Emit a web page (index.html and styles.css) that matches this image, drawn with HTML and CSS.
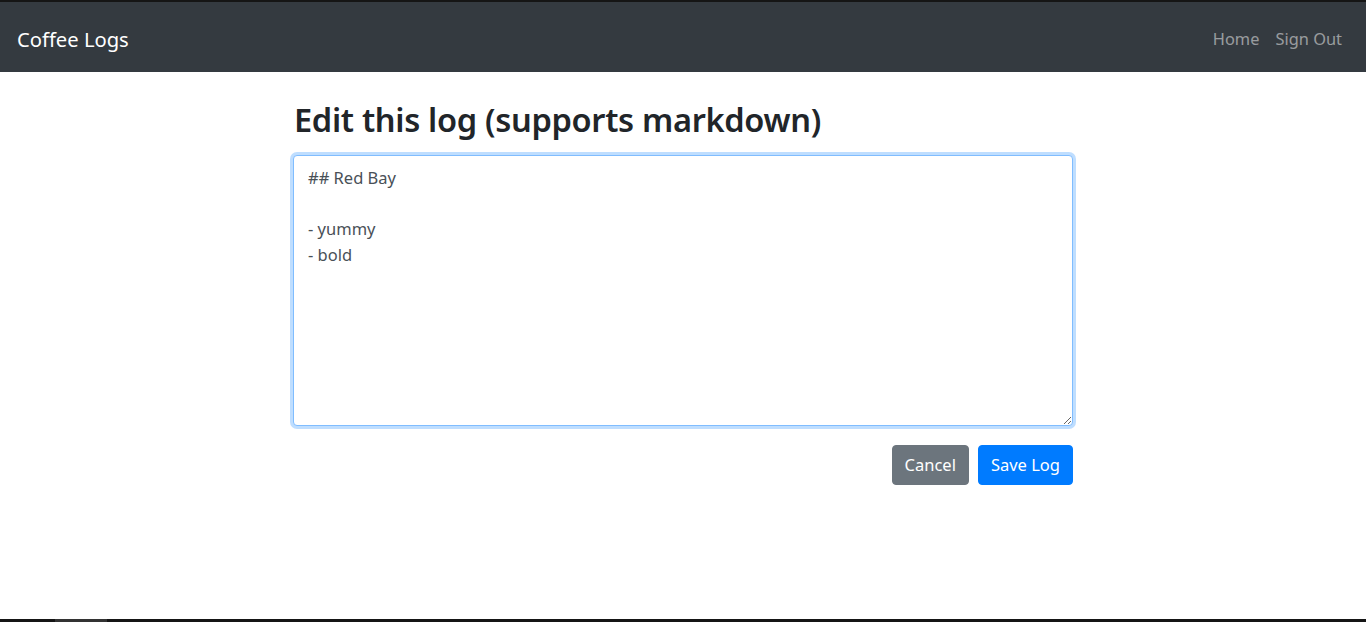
FILE: index.html
```html
<!DOCTYPE html>
<html lang="en">
<head>
<meta charset="utf-8">
<title>Coffee Logs</title>
<link rel="stylesheet" href="styles.css">
</head>
<body>
<div class="page">
  <nav class="navbar">
    <a class="brand" href="#">Coffee Logs</a>
    <div class="nav-links">
      <a class="nav-link" href="#">Home</a>
      <a class="nav-link" href="#">Sign Out</a>
    </div>
  </nav>
  <main class="main">
    <div class="container">
      <h2 class="title">Edit this log (supports markdown)</h2>
      <form class="form">
        <textarea class="editor" rows="10">## Red Bay

- yummy
- bold</textarea>
        <div class="actions">
          <button type="button" class="btn btn-secondary">Cancel</button>
          <button type="submit" class="btn btn-primary">Save Log</button>
        </div>
      </form>
    </div>
  </main>
  <div class="bottom-strip"><span class="strip-tab"></span></div>
</div>
</body>
</html>
```
FILE: styles.css
```css
* { box-sizing: border-box; }
html, body { margin: 0; padding: 0; }
body {
  font-family: "Noto Sans", "Open Sans", "Liberation Sans", sans-serif;
  color: #212529;
  background: #fff;
  font-size: 17px;
}
.page {
  display: flex;
  flex-direction: column;
  height: 100vh;
}
.navbar {
  flex: none;
  height: 72px;
  border-top: 2px solid #151515;
  background: #343a40;
  display: flex;
  align-items: center;
  justify-content: space-between;
  padding: 3px 16px 0 17px;
}
.brand {
  color: #fff;
  text-decoration: none;
  font-size: 20.2px;
  line-height: 30px;
}
.nav-links { display: flex; }
.nav-link {
  color: rgba(255,255,255,.5);
  text-decoration: none;
  font-size: 16.4px;
  line-height: 26px;
  padding: 0 8px;
}
.main { flex: 1; }
.container {
  width: 780px;
  margin: 0 auto;
  padding-top: 25px;
}
.title {
  margin: 0 0 12px;
  font-size: 32.6px;
  font-weight: 600;
  line-height: 46px;
  letter-spacing: -0.32px;
  padding-left: 1px;
}
.form { display: flex; flex-direction: column; }
.editor {
  display: block;
  width: 100%;
  height: 271px;
  padding: 9px 14px 6px;
  font-family: inherit;
  font-size: 16.5px;
  line-height: 25.5px;
  color: #495057;
  border: 1px solid #80bdff;
  border-radius: 4px;
  box-shadow: 0 0 0 3px rgba(0,123,255,.25);
  outline: none;
  resize: vertical;
}
.actions {
  display: flex;
  justify-content: flex-end;
  gap: 9px;
  margin-top: 19px;
}
.btn {
  font-family: inherit;
  font-size: 16.5px;
  line-height: 25.5px;
  height: 40px;
  padding: 6px 12px;
  border: 1px solid transparent;
  border-radius: 4px;
  color: #fff;
  cursor: pointer;
}
.btn-secondary { background: #6c757d; border-color: #6c757d; }
.btn-primary { background: #007bff; border-color: #007bff; }
.bottom-strip {
  flex: none;
  height: 3px;
  background: #151515;
  display: flex;
}
.strip-tab {
  width: 52px;
  margin-left: 55px;
  background: #333;
}
```
